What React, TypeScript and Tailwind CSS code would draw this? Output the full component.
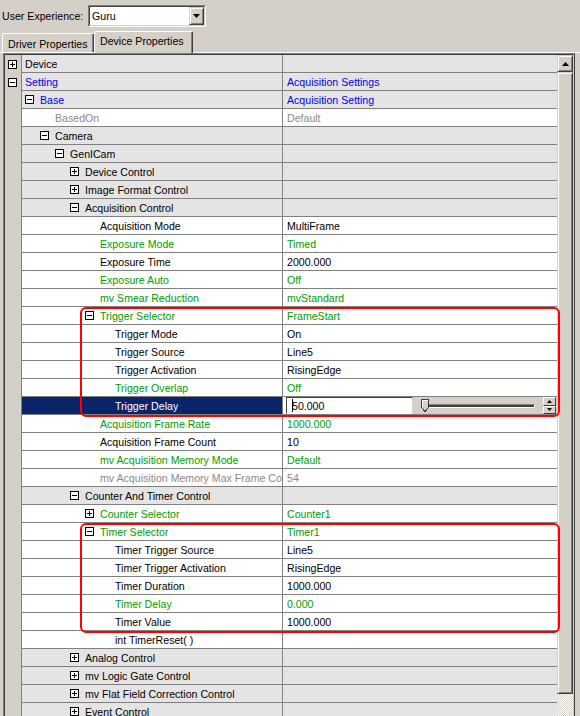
import React from "react";

type Tone = "k" | "b" | "g" | "s";

type Row = {
  name: string;
  value?: string;
  level: number;
  tone?: Tone;
  box?: "+" | "-";
  cat?: boolean;
  sel?: boolean;
};

const rows: Row[] = [
  { name: "Device", level: 0, cat: true },
  { name: "Setting", value: "Acquisition Settings", level: 0, tone: "b", cat: true },
  { name: "Base", value: "Acquisition Setting", level: 1, box: "-", tone: "b", cat: true },
  { name: "BasedOn", value: "Default", level: 2, tone: "s" },
  { name: "Camera", level: 2, box: "-", cat: true },
  { name: "GenICam", level: 3, box: "-", cat: true },
  { name: "Device Control", level: 4, box: "+", cat: true },
  { name: "Image Format Control", level: 4, box: "+", cat: true },
  { name: "Acquisition Control", level: 4, box: "-", cat: true },
  { name: "Acquisition Mode", value: "MultiFrame", level: 5 },
  { name: "Exposure Mode", value: "Timed", level: 5, tone: "g" },
  { name: "Exposure Time", value: "2000.000", level: 5 },
  { name: "Exposure Auto", value: "Off", level: 5, tone: "g" },
  { name: "mv Smear Reduction", value: "mvStandard", level: 5, tone: "g" },
  { name: "Trigger Selector", value: "FrameStart", level: 5, box: "-", tone: "g" },
  { name: "Trigger Mode", value: "On", level: 6 },
  { name: "Trigger Source", value: "Line5", level: 6 },
  { name: "Trigger Activation", value: "RisingEdge", level: 6 },
  { name: "Trigger Overlap", value: "Off", level: 6, tone: "g" },
  { name: "Trigger Delay", value: "50.000", level: 6, sel: true },
  { name: "Acquisition Frame Rate", value: "1000.000", level: 5, tone: "g" },
  { name: "Acquisition Frame Count", value: "10", level: 5 },
  { name: "mv Acquisition Memory Mode", value: "Default", level: 5, tone: "g" },
  { name: "mv Acquisition Memory Max Frame Count", value: "54", level: 5, tone: "s" },
  { name: "Counter And Timer Control", level: 4, box: "-", cat: true },
  { name: "Counter Selector", value: "Counter1", level: 5, box: "+", tone: "g" },
  { name: "Timer Selector", value: "Timer1", level: 5, box: "-", tone: "g" },
  { name: "Timer Trigger Source", value: "Line5", level: 6 },
  { name: "Timer Trigger Activation", value: "RisingEdge", level: 6 },
  { name: "Timer Duration", value: "1000.000", level: 6 },
  { name: "Timer Delay", value: "0.000", level: 6, tone: "g" },
  { name: "Timer Value", value: "1000.000", level: 6 },
  { name: "int TimerReset( )", level: 6 },
  { name: "Analog Control", level: 4, box: "+", cat: true },
  { name: "mv Logic Gate Control", level: 4, box: "+", cat: true },
  { name: "mv Flat Field Correction Control", level: 4, box: "+", cat: true },
  { name: "Event Control", level: 4, box: "+", cat: true },
];

const toneClass: Record<Tone, string> = {
  k: "text-black",
  b: "text-[#0000f0]",
  g: "text-[#00a000]",
  s: "text-[#8a8a8a]",
};

const indent = [
  "pl-[3px]",
  "pl-[18px]",
  "pl-[33px]",
  "pl-[48px]",
  "pl-[63px]",
  "pl-[78px]",
  "pl-[93px]",
];

function ExpandBox({ plus }: { plus: boolean }) {
  return (
    <svg width="9" height="9" viewBox="0 0 9 9" shapeRendering="crispEdges" className="shrink-0">
      <rect x="0.5" y="0.5" width="8" height="8" fill="#fff" stroke="#000" />
      <path d="M2 4.5h5" stroke="#000" />
      {plus ? <path d="M4.5 2v5" stroke="#000" /> : null}
    </svg>
  );
}

function DelayEditor() {
  return (
    <div className="flex h-full flex-1 items-stretch pl-[3px]">
      <div className="relative flex w-[127px] items-center border border-t-[#404040] border-l-[#404040] border-r-[#d4d0c8] border-b-white bg-white pl-[5px] text-black">
        50.000
        <span className="absolute left-[5px] top-[1px] h-[13px] w-px bg-black" />
      </div>
      <div className="flex flex-1 items-center bg-[#d4d0c8] pl-[8px]">
        <div className="relative flex h-[15px] w-[114px] items-center">
          <div className="h-[4px] w-full border border-t-[#808080] border-l-[#808080] border-r-white border-b-white bg-[#404040]" />
          <svg width="8" height="13" viewBox="0 0 8 13" shapeRendering="crispEdges" className="absolute left-0 top-[1px]">
            <path d="M0.5 0.5h7v8l-3.5 4l-3.5-4z" fill="#d4d0c8" stroke="#404040" />
            <path d="M1.5 8V1.5h5" fill="none" stroke="#fff" />
          </svg>
        </div>
        <div className="ml-auto mr-[1px] flex h-full w-[13px] flex-col">
          <div className="flex flex-1 items-center justify-center border border-t-white border-l-white border-r-[#404040] border-b-[#404040] bg-[#d4d0c8]">
            <svg width="5" height="3" viewBox="0 0 5 3"><path d="M2.5 0L5 3H0z" fill="#000" /></svg>
          </div>
          <div className="flex flex-1 items-center justify-center border border-t-white border-l-white border-r-[#404040] border-b-[#404040] bg-[#d4d0c8]">
            <svg width="5" height="3" viewBox="0 0 5 3"><path d="M0 0h5L2.5 3z" fill="#000" /></svg>
          </div>
        </div>
      </div>
    </div>
  );
}

function GridRow({ row }: { row: Row }) {
  const tone = toneClass[row.tone ?? "k"];
  const pad = indent[row.box ? row.level - 1 : row.level];
  return (
    <div className={`flex h-[18px] border-b border-[#808080] ${row.cat ? "bg-[#e4e4e4]" : "bg-white"}`}>
      <div
        className={`flex w-[261px] shrink-0 items-center overflow-hidden whitespace-nowrap border-r border-[#808080] ${pad} ${
          row.sel ? "bg-[#0a246a] text-white" : tone
        }`}
      >
        {row.box ? (
          <span className="mr-[6px] flex">
            <ExpandBox plus={row.box === "+"} />
          </span>
        ) : null}
        <span className="min-w-0 overflow-hidden">{row.name}</span>
      </div>
      {row.sel ? (
        <DelayEditor />
      ) : (
        <div className={`flex flex-1 items-center overflow-hidden whitespace-nowrap pl-[4px] ${tone}`}>
          {row.value ?? ""}
        </div>
      )}
    </div>
  );
}

export default function App() {
  return (
    <div className="relative h-[716px] w-[580px] overflow-hidden bg-[#d4d0c8] font-['Liberation_Sans',Arial,sans-serif] text-[10.6px] leading-[12px] text-black">
      {/* user experience */}
      <div className="flex h-[31px] items-center pl-[2px]">
        <span className="w-[86px]">User Experience:</span>
        <div className="h-[22px] w-[118px] border border-t-[#808080] border-l-[#808080] border-r-white border-b-white">
          <div className="flex h-full items-center border border-t-[#404040] border-l-[#404040] border-r-[#d4d0c8] border-b-[#d4d0c8] bg-white pl-[2px]">
            <span className="flex-1">Guru</span>
            <div className="flex h-full w-[15px] items-center justify-center border border-t-[#d4d0c8] border-l-[#d4d0c8] border-r-[#404040] border-b-[#404040] bg-[#d4d0c8] shadow-[inset_1px_1px_#fff,inset_-1px_-1px_#808080]">
              <svg width="7" height="4" viewBox="0 0 7 4"><path d="M0 0h7L3.5 4z" fill="#000" /></svg>
            </div>
          </div>
        </div>
      </div>

      {/* tabs */}
      <div className="flex h-[21px] items-end pl-[2px]">
        <div className="h-[19px] w-[92px] rounded-t-[2px] border-t border-l border-r border-t-white border-l-white border-r-[#404040] pl-[5px] pt-[4px] shadow-[inset_-1px_0_#808080]">
          Driver Properties
        </div>
        <div className="relative z-10 -mb-px h-[22px] w-[99px] rounded-t-[2px] border-t border-l border-r border-t-white border-l-white border-r-[#404040] bg-[#d4d0c8] pl-[5px] pt-[3px] shadow-[inset_-1px_0_#808080]">
          Device Properties
        </div>
      </div>

      {/* panel */}
      <div className="border-t border-white">
        <div className="ml-[3px] w-[572px] border border-t-[#808080] border-l-[#808080] border-r-[#404040] border-b-white">
          <div className="flex border border-t-[#404040] border-l-[#404040] border-r-[#d4d0c8] border-b-[#d4d0c8]">
            {/* gutter */}
            <div className="flex w-[17px] shrink-0 flex-col border-r border-[#808080] bg-[#d4d0c8]">
              <div className="flex h-[18px] items-center justify-center pr-px">
                <ExpandBox plus />
              </div>
              <div className="flex h-[18px] items-center justify-center pr-px">
                <ExpandBox plus={false} />
              </div>
            </div>

            {/* rows */}
            <div className="flex w-[535px] shrink-0 flex-col">
              {rows.map((r, i) => (
                <GridRow key={i} row={r} />
              ))}
            </div>

            {/* scrollbar */}
            <div className="flex w-[16px] shrink-0 flex-col">
              <div className="flex h-[17px] items-center justify-center border border-t-[#d4d0c8] border-l-[#d4d0c8] border-r-[#404040] border-b-[#404040] bg-[#d4d0c8] shadow-[inset_1px_1px_#fff,inset_-1px_-1px_#808080]">
                <svg width="7" height="4" viewBox="0 0 7 4"><path d="M3.5 0L7 4H0z" fill="#000" /></svg>
              </div>
              <div className="h-[622px] border border-t-[#d4d0c8] border-l-[#d4d0c8] border-r-[#404040] border-b-[#404040] bg-[#d4d0c8] shadow-[inset_1px_1px_#fff,inset_-1px_-1px_#808080]" />
              <div className="flex-1 bg-[repeating-conic-gradient(#d4d0c8_0_25%,#ffffff_0_50%)] bg-[length:2px_2px]" />
            </div>
          </div>
        </div>
      </div>

      {/* highlight frames */}
      <div className="pointer-events-none absolute left-[80px] top-[307px] h-[110px] w-[480px] rounded-[6px] border-2 border-[#ff0000]" />
      <div className="pointer-events-none absolute left-[80px] top-[523px] h-[110px] w-[480px] rounded-[6px] border-2 border-[#ff0000]" />
    </div>
  );
}
